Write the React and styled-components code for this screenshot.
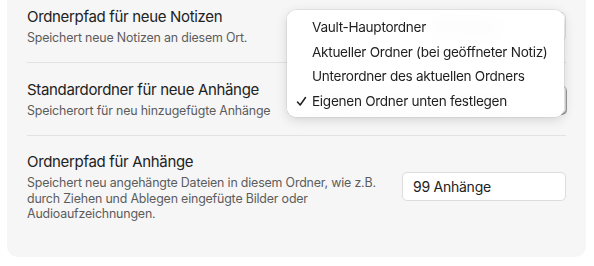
import React from 'react'
import styled, { createGlobalStyle } from 'styled-components'

const GlobalStyle = createGlobalStyle`
  html, body {
    margin: 0;
    padding: 0;
    background: #ffffff;
    font-family: Inter, "Noto Sans", "Liberation Sans", sans-serif;
    -webkit-font-smoothing: antialiased;
  }
  body {
    width: 594px;
    height: 266px;
    overflow: hidden;
  }
`

const Page = styled.div`
  padding: 0 8px 0 7px;
`

const Panel = styled.div`
  position: relative;
  margin-top: -10px;
  background: #f6f6f6;
  border-radius: 0 0 11px 11px;
  padding: 0 20px 19px 20px;
`

const Row = styled.div`
  display: flex;
  align-items: center;
  gap: 20px;
  padding: 16px 0;
  border-bottom: ${p => (p.last ? 'none' : '1px solid #e2e2e2')};
  min-height: 40px;
`

const Info = styled.div`
  flex: 1;
  min-width: 0;
`

const Title = styled.div`
  font-size: 15px;
  line-height: 20px;
  color: #222;
  letter-spacing: -0.33px;
  white-space: nowrap;
`

const Desc = styled.div`
  margin-top: 3px;
  font-size: 12.4px;
  line-height: 15.5px;
  color: #5c5c5c;
  letter-spacing: -0.17px;
  white-space: ${p => (p.wrap ? 'normal' : 'nowrap')};
`

const TextInput = styled.input`
  flex-shrink: 0;
  width: 164px;
  height: 29px;
  box-sizing: border-box;
  border: 1px solid #dcdcdc;
  border-radius: 5px;
  background: #fff;
  padding: 0 10px;
  font-family: inherit;
  font-size: 14px;
  letter-spacing: -0.25px;
  color: #222;
  outline: none;
`

const SelectButton = styled.div`
  flex-shrink: 0;
  width: 277px;
  height: 29px;
  box-sizing: border-box;
  display: flex;
  align-items: center;
  justify-content: space-between;
  padding: 0 10px 0 24px;
  background: #fff;
  border-radius: 5px;
  border: 1px solid #d4d4d4;
  box-shadow: 1px 1px 0 #9a9a9a;
  font-size: 13.5px;
  letter-spacing: -0.3px;
  color: #222;
`

const Menu = styled.div`
  position: absolute;
  top: 20px;
  left: 280px;
  width: 277px;
  box-sizing: border-box;
  padding: 5px 0 4px;
  border-radius: 9px;
  background: rgba(255, 255, 255, 0.94);
  backdrop-filter: blur(8px);
  -webkit-backdrop-filter: blur(8px);
  box-shadow: 0 0 0 0.5px rgba(0, 0, 0, 0.12), 0 3px 12px rgba(0, 0, 0, 0.14);
`

const MenuItem = styled.div`
  position: relative;
  height: 24.5px;
  display: flex;
  align-items: center;
  padding-left: 25px;
  font-size: 13.6px;
  letter-spacing: -0.3px;
  color: #1e1e1e;
`

const Check = styled.svg`
  position: absolute;
  left: 9px;
  top: 7px;
`

const Chevrons = () => (
  <svg width="8" height="12" viewBox="0 0 8 12">
    <path d="M1.5 4.5 L4 2 L6.5 4.5 M1.5 7.5 L4 10 L6.5 7.5" fill="none" stroke="#555" strokeWidth="1.3" strokeLinecap="round" strokeLinejoin="round" />
  </svg>
)

const options = [
  'Vault-Hauptordner',
  'Aktueller Ordner (bei geöffneter Notiz)',
  'Unterordner des aktuellen Ordners',
  'Eigenen Ordner unten festlegen'
]

export default function App () {
  return (
    <Page>
      <GlobalStyle />
      <Panel>
        <Row>
          <Info>
            <Title>Ordnerpfad für neue Notizen</Title>
            <Desc>Speichert neue Notizen an diesem Ort.</Desc>
          </Info>
          <TextInput defaultValue='99 Notizen' style={{ paddingLeft: 30 }} />
        </Row>
        <Row>
          <Info>
            <Title>Standardordner für neue Anhänge</Title>
            <Desc>Speicherort für neu hinzugefügte Anhänge</Desc>
          </Info>
          <SelectButton>
            <span>Eigenen Ordner unten festlegen</span>
            <Chevrons />
          </SelectButton>
        </Row>
        <Row last>
          <Info>
            <Title>Ordnerpfad für Anhänge</Title>
            <Desc wrap>
              Speichert neu angehängte Dateien in diesem Ordner, wie z.B. durch Ziehen und Ablegen eingefügte Bilder oder Audioaufzeichnungen.
            </Desc>
          </Info>
          <TextInput defaultValue='99 Anhänge' />
        </Row>
        <Menu>
          {options.map((o, i) => (
            <MenuItem key={o}>
              {i === options.length - 1 && (
                <Check width="11" height="11" viewBox="0 0 11 11">
                  <path d="M1.5 6 L4.2 9 L9.5 1.5" fill="none" stroke="#1e1e1e" strokeWidth="1.5" strokeLinecap="round" strokeLinejoin="round" />
                </Check>
              )}
              {o}
            </MenuItem>
          ))}
        </Menu>
      </Panel>
    </Page>
  )
}
